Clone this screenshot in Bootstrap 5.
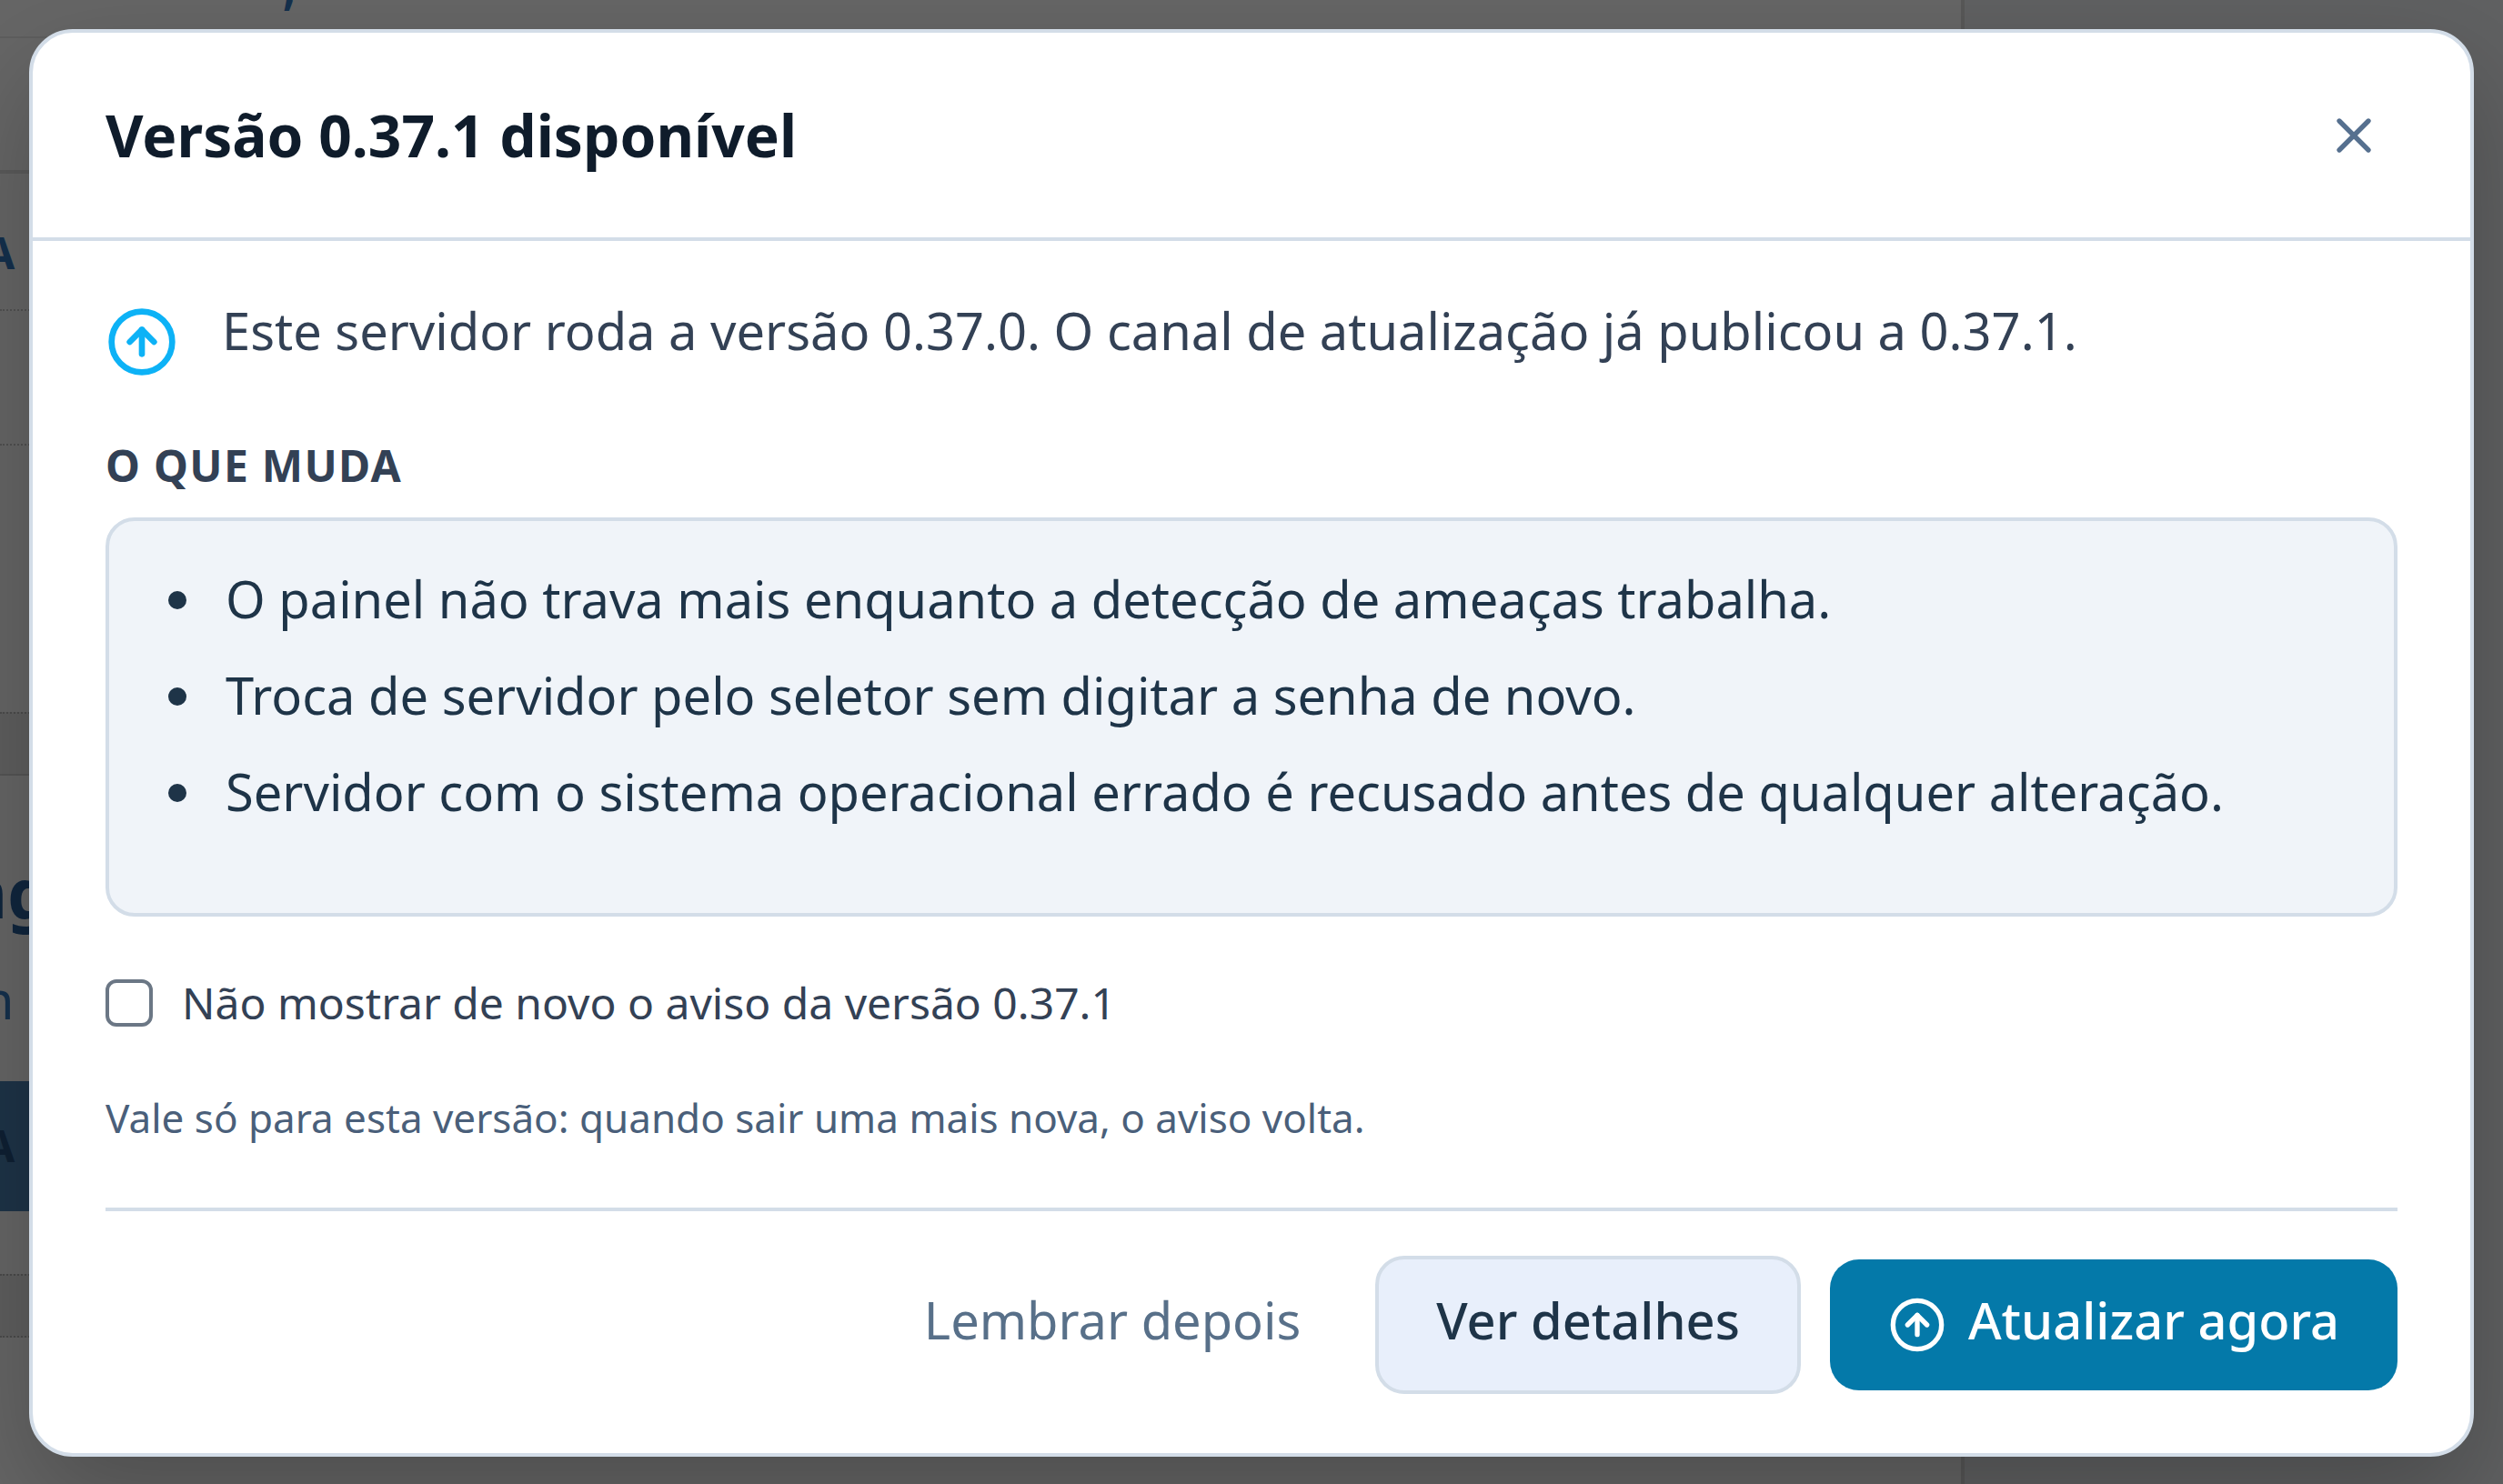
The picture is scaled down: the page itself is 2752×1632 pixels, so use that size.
<!doctype html>
<html lang="pt-BR"><head><meta charset="utf-8">
<link rel="stylesheet" href="https://cdn.jsdelivr.net/npm/bootstrap@5.3.0/dist/css/bootstrap.min.css">
<style>
html,body{height:100%;margin:0}
body{font-family:"Noto Sans",sans-serif;background:#666;overflow:hidden;color:#334155}
.pg{height:1632px;position:relative;overflow:hidden;background:#666}
.pg-main{flex:0 0 2156px;color:#14304d;font-weight:700;font-size:48px;line-height:1}
.pg-side{flex:1;background:#606162;border-left:4px solid #585858}
.r0{height:42px;border-bottom:2px solid #5e5e5e;padding-left:311px;display:flow-root}
.r0 span{display:block;margin-top:-36px}
.r1{height:149px;border-bottom:4px solid #5b5b5b}
.r2{height:151px;border-bottom:2px dotted #525252;padding-top:63px}
.r3{height:148px;border-bottom:2px dotted #505050}
.r4{height:293px}
.r5{height:70px;background:#5f5f5f;border-top:2px dotted #4c4c4c;border-bottom:2px solid #555}
.r6{height:336px;padding-top:90px}
.r7{height:143px;background:#1e3448;padding-top:47px;color:#0f2033}
.r8{height:69px}
.r9{height:70px;background:#5f5f5f;border-top:2px dotted #4b4b4b;border-bottom:2px dotted #4b4b4b}
.r10{height:161px}
.frag-a{display:block;margin-left:-17px}
.frag-h{display:block;margin-left:-64px;font-size:76px;color:#10263e}
.frag-n{display:block;margin-left:-53px;font-size:58px;font-weight:400;margin-top:51px;color:#14304d}
.dlg{position:absolute;top:32px;left:32px;width:2688px;background:#fff;border:4px solid #d3dde8;border-radius:48px;box-shadow:0 48px 120px rgba(0,0,0,.24);overflow:hidden}
.dlg-head{height:229px;padding:0 80px;border-bottom:4px solid #d3dde8;border-radius:0}
.dlg-title{font-size:64px;font-weight:700;color:#0f1c2b;line-height:1.5}
.x-btn{width:64px;height:64px;padding:0;border:0;margin:0 16px 0 0;background:none;color:#56708f;display:flex}
.x-btn svg{width:64px;height:64px}
.dlg-body{padding:56px 80px 0}
.intro{gap:48px}
.intro svg{flex:none;width:80px;height:80px;margin-top:15px;color:#0db2f6}
.intro p{font-size:56px;line-height:84px;color:#334155;margin:0}
.lbl{font-size:48px;line-height:72px;font-weight:700;color:#334155;letter-spacing:1.3px;margin-top:60px}
.notes{background:#f0f4f9;border:4px solid #d3dde8;border-radius:32px;margin-top:21px;padding:43px 60px 46px}
.notes ul{font-size:56px;line-height:84px;color:#1e3448;margin:0 0 46px;padding-left:52px}
.notes li{margin-bottom:22px;padding-left:16px}
.chk-row{margin:59px 0 0;padding:0;min-height:0;gap:32px}
.chk-row .form-check-input{width:52px;height:52px;margin:0;float:none;flex:none;border:4px solid #6b7785;border-radius:12px}
.chk-row label{font-size:48px;line-height:72px;color:#334155}
.hint{font-size:44px;line-height:66px;color:#4a5f7a;margin:57px 0 0}
.foot{margin:66px 80px 0;padding:49px 0 65px;border-top:4px solid #d3dde8;gap:32px}
.act{font-size:56px;line-height:84px;padding:30px 64px;border-radius:32px;font-weight:500;display:inline-flex;align-items:center}
.act-txt{display:block;line-height:72px;padding-bottom:12px}
.act-ghost{background:none;border:0;color:#587089;padding:30px 50px 30px 48px;font-weight:400}
.act-soft{background:#e8effb;border:4px solid #d3dde8;color:#1e3448;padding-left:63px;padding-right:63px}
.act-main{background:#0479a9;border:0;color:#fff;gap:24px}
.act-main svg{width:64px;height:64px}
</style></head><body>
<div class="pg d-flex">
  <div class="pg-main">
    <div class="r0"><span>,</span></div>
    <div class="r1"></div>
    <div class="r2"><span class="frag-a">A</span></div>
    <div class="r3"></div>
    <div class="r4"></div>
    <div class="r5"></div>
    <div class="r6"><span class="frag-h">ing</span><span class="frag-n">en</span></div>
    <div class="r7"><span class="frag-a">A</span></div>
    <div class="r8"></div>
    <div class="r9"></div>
    <div class="r10"></div>
  </div>
  <div class="pg-side"></div>
  <div class="dlg modal-content">
    <div class="dlg-head modal-header d-flex align-items-center justify-content-between">
      <h2 class="dlg-title modal-title m-0">Versão 0.37.1 disponível</h2>
      <button class="x-btn" type="button" aria-label="Fechar"><svg viewBox="0 0 24 24" fill="none" stroke="currentColor" stroke-width="2" stroke-linecap="round" stroke-linejoin="round"><line x1="18" y1="6" x2="6" y2="18"/><line x1="6" y1="6" x2="18" y2="18"/></svg></button>
    </div>
    <div class="dlg-body">
      <div class="intro d-flex">
        <svg viewBox="0 0 24 24" fill="none" stroke="currentColor" stroke-width="2" stroke-linecap="round" stroke-linejoin="round"><circle cx="12" cy="12" r="10"/><polyline points="16 12 12 8 8 12"/><line x1="12" y1="16" x2="12" y2="8"/></svg>
        <p>Este servidor roda a versão 0.37.0. O canal de atualização já publicou a 0.37.1.</p>
      </div>
      <div class="lbl">O QUE MUDA</div>
      <div class="notes"><ul>
        <li>O painel não trava mais enquanto a detecção de ameaças trabalha.</li>
        <li>Troca de servidor pelo seletor sem digitar a senha de novo.</li>
        <li>Servidor com o sistema operacional errado é recusado antes de qualquer alteração.</li>
      </ul></div>
      <div class="chk-row form-check d-flex align-items-center">
        <input class="form-check-input" type="checkbox" id="nao-mostrar">
        <label class="form-check-label" for="nao-mostrar">Não mostrar de novo o aviso da versão 0.37.1</label>
      </div>
      <p class="hint">Vale só para esta versão: quando sair uma mais nova, o aviso volta.</p>
    </div>
    <div class="foot d-flex align-items-center justify-content-end">
      <button class="btn act act-ghost" type="button"><span class="act-txt">Lembrar depois</span></button>
      <button class="btn act act-soft" type="button"><span class="act-txt">Ver detalhes</span></button>
      <button class="btn act act-main" type="button"><svg viewBox="0 0 24 24" fill="none" stroke="currentColor" stroke-width="2" stroke-linecap="round" stroke-linejoin="round"><circle cx="12" cy="12" r="10"/><polyline points="16 12 12 8 8 12"/><line x1="12" y1="16" x2="12" y2="8"/></svg><span class="act-txt">Atualizar agora</span></button>
    </div>
  </div>
</div>
<script src="https://cdn.jsdelivr.net/npm/bootstrap@5.3.0/dist/js/bootstrap.bundle.min.js"></script>
</body></html>
